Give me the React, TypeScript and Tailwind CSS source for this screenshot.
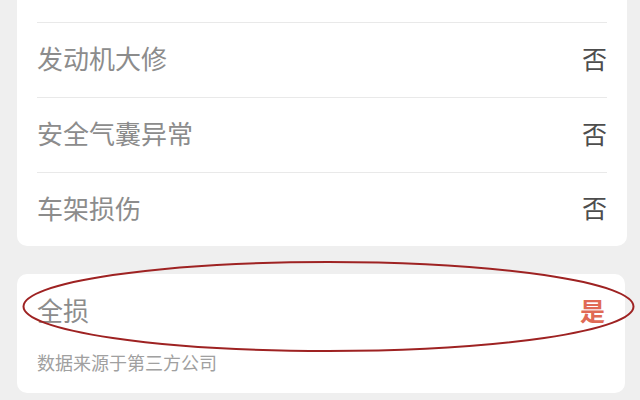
import React from "react";

const font = { fontFamily: '"Noto Sans CJK SC", "Noto Sans", sans-serif' };

function Row({ label, value, last }: { label: string; value: string; last?: boolean }) {
  return (
    <div className={`flex items-center justify-between border-t border-[#e9e9e9] pb-[4px] ${last ? "h-[74px]" : "h-[75px]"}`}>
      <span className="text-[26px] text-[#8c8c8c] leading-none">{label}</span>
      <span className="text-[25px] text-[#4d4d4d] leading-none">{value}</span>
    </div>
  );
}

export default function App() {
  return (
    <div className="relative w-[640px] h-[400px] overflow-hidden bg-[#efefef] px-[17px]" style={font}>
      <div className="w-[610px] bg-white rounded-b-[10px] pt-[22px] px-[20px]">
        <Row label="发动机大修" value="否" />
        <Row label="安全气囊异常" value="否" />
        <Row label="车架损伤" value="否" last />
      </div>
      <div className="mt-[28px] w-[608px] h-[119px] bg-white rounded-[10px] px-[20px]">
        <div className="flex items-center justify-between h-[72px]">
          <span className="text-[26px] text-[#8c8c8c] leading-none">全损</span>
          <span className="text-[25px] text-[#e06a55] font-bold leading-none">是</span>
        </div>
        <div className="mt-[4px] text-[18px] leading-[24px] text-[#a0a0a0]">数据来源于第三方公司</div>
      </div>
      <svg className="absolute left-0 top-0 pointer-events-none" width="640" height="400">
        <ellipse cx="328.5" cy="306.5" rx="305" ry="44.5" fill="none" stroke="#9e2222" strokeWidth="2" />
      </svg>
    </div>
  );
}
